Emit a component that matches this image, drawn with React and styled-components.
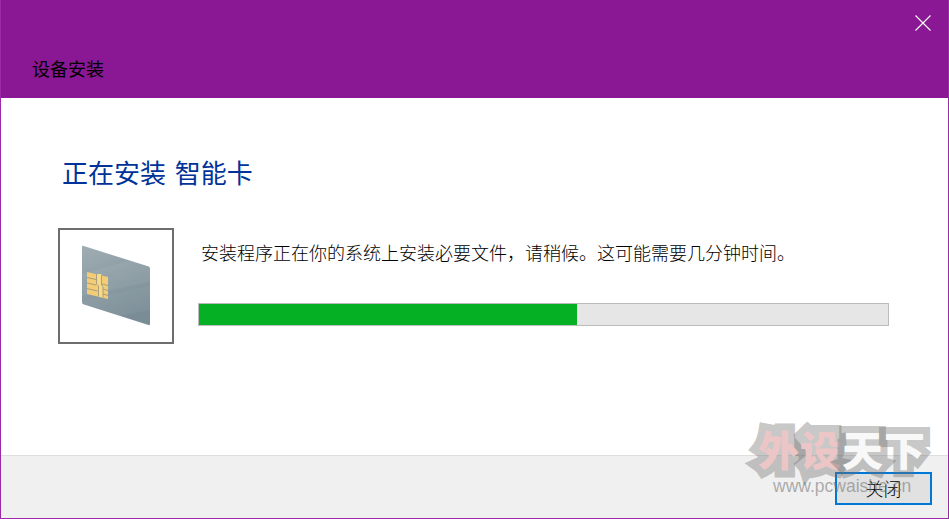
import React from "react";
import styled, { createGlobalStyle } from "styled-components";

const CJK = '"Noto Sans CJK SC", "Liberation Sans", sans-serif';

const Global = createGlobalStyle`
  html, body { margin: 0; padding: 0; background: #fff; }
  * { box-sizing: border-box; }
`;

const Dialog = styled.div`
  position: relative;
  width: 949px;
  height: 519px;
  display: flex;
  flex-direction: column;
  font-family: ${CJK};
  font-weight: 300;
  overflow: hidden;
  border: 1px solid #9a2aa6;
  border-top: 0;
  background: #fff;
`;

const Header = styled.header`
  height: 98px;
  margin: 0 -1px;
  flex: none;
  background: #8a1793;
  display: flex;
  justify-content: space-between;
  align-items: flex-start;
  padding: 55px 18px 0 32px;
`;

const Title = styled.h1`
  margin: 0;
  font-size: 18px;
  line-height: 26px;
  font-weight: 400;
  color: #000;
`;

const Close = styled.button`
  width: 16px;
  height: 16px;
  padding: 0;
  margin-top: -40px;
  border: 0;
  background: none;
  display: block;
  svg { display: block; }
`;

const Body = styled.main`
  flex: 1;
  padding: 55px 59px 0 57px;
  display: flex;
  flex-direction: column;
`;

const Heading = styled.h2`
  margin: 0 0 38px 4px;
  font-size: 26px;
  line-height: 37px;
  font-weight: 400;
  word-spacing: 3px;
  color: #003399;
`;

const Row = styled.section`
  display: flex;
  gap: 24px;
`;

const IconBox = styled.div`
  width: 116px;
  height: 116px;
  flex: none;
  border: 2px solid #6d6d6d;
  background: #fff;
  svg { display: block; }
`;

const Column = styled.div`
  flex: 1;
  padding-top: 11px;
`;

const Message = styled.p`
  margin: 0 0 38px 3px;
  font-size: 18px;
  line-height: 26px;
  color: #000;
  white-space: nowrap;
`;

const Track = styled.div`
  width: 691px;
  height: 23px;
  border: 1px solid #bcbcbc;
  background: #e6e6e6;
`;

const Fill = styled.div`
  height: 100%;
  background: #06b025;
`;

const Footer = styled.footer`
  height: 63px;
  flex: none;
  background: #f0f0f0;
  border-top: 1px solid #dfdfdf;
  display: flex;
  justify-content: flex-end;
  align-items: center;
  padding: 0 16px 0 0;
`;

const CloseButton = styled.button`
  width: 97px;
  height: 33px;
  margin-top: 3px;
  padding: 0;
  border: 2px solid #0078d7;
  background: #e1e1e1;
  color: #000;
  font-family: ${CJK};
  font-weight: 300;
  font-size: 18px;
  line-height: 27px;
`;

const Watermark = styled.div`
  position: absolute;
  left: 757px;
  top: 420px;
  width: 185px;
  pointer-events: none;
`;

const MarkTitle = styled.div`
  display: flex;
  font-size: 41px;
  line-height: 56px;
  font-weight: 900;
  letter-spacing: 1px;
  paint-order: stroke fill;
  -webkit-text-stroke: 14px rgba(110, 110, 110, 0.4);
`;

const MarkWord = styled.span`
  color: ${p => p.$tone};
`;

const MarkUrl = styled.div`
  margin: 0 0 0 15px;
  font-family: "Liberation Sans", sans-serif;
  font-size: 17.5px;
  line-height: 20px;
  color: rgba(110, 110, 110, 0.55);
  white-space: nowrap;
`;

function SmartCard() {
  return (
    <svg width="112" height="112" viewBox="0 0 112 112">
      <defs>
        <linearGradient id="card" x1="0" y1="0" x2="0.35" y2="1">
          <stop offset="0" stopColor="#a0adb3" />
          <stop offset="1" stopColor="#7a8d96" />
        </linearGradient>
      </defs>
      <path d="M23 15.8 L88.8 36.6 Q90 37 90 38.5 V94 Q90 95.5 88.5 95 L24 74.5 Q22 74 22 72 V17 Q22 15.5 23 15.8 Z" fill="url(#card)" />
      <path d="M22 44 L90 25 V52 L22 66 Z" fill="#fff" opacity="0.05" />
      <path d="M22 71 L90 56 V80 L60 86 L24 75 Z" fill="#fff" opacity="0.04" />
      <path d="M27 42 L48 47 V69 L27 64 Z" fill="#f2cd76" />
      <path d="M36.5 44 H41.5 V55 L43 57 V67.5 L38.5 66.5 V56 L36.5 54Z" fill="#f7d98c" />
      <g stroke="#a3997a" strokeWidth="0.9" fill="none">
        <path d="M27 47.5 L36 49.5" />
        <path d="M27 53 L36 55" />
        <path d="M27 58.5 L37.5 61" />
        <path d="M42 54 L48 55.5" />
        <path d="M43 59 L48 60.5" />
        <path d="M43 64 L48 65.5" />
        <path d="M36.5 44 V54 L38.5 56 V66.5" />
        <path d="M41.5 45 V55 L43 57 V67.5" />
      </g>
    </svg>
  );
}

export default function App() {
  return (
    <>
      <Global />
      <Dialog>
        <Header>
          <Title>设备安装</Title>
          <Close aria-label="关闭">
            <svg width="16" height="16" viewBox="0 0 16 16">
              <path d="M0.5 0.5 L15.5 15.5 M15.5 0.5 L0.5 15.5" stroke="#fff" strokeWidth="1.1" fill="none" />
            </svg>
          </Close>
        </Header>
        <Body>
          <Heading>正在安装 智能卡</Heading>
          <Row>
            <IconBox><SmartCard /></IconBox>
            <Column>
              <Message>安装程序正在你的系统上安装必要文件，请稍候。这可能需要几分钟时间。</Message>
              <Track><Fill style={{ width: `${(378 / 689) * 100}%` }} /></Track>
            </Column>
          </Row>
        </Body>
        <Footer>
          <CloseButton>关闭</CloseButton>
        </Footer>
        <Watermark>
          <MarkTitle>
            <MarkWord $tone="#ecc6c6">外设</MarkWord>
            <MarkWord $tone="#f8f8f8">天下</MarkWord>
          </MarkTitle>
          <MarkUrl>www.pcwaishe.cn</MarkUrl>
        </Watermark>
      </Dialog>
    </>
  );
}
